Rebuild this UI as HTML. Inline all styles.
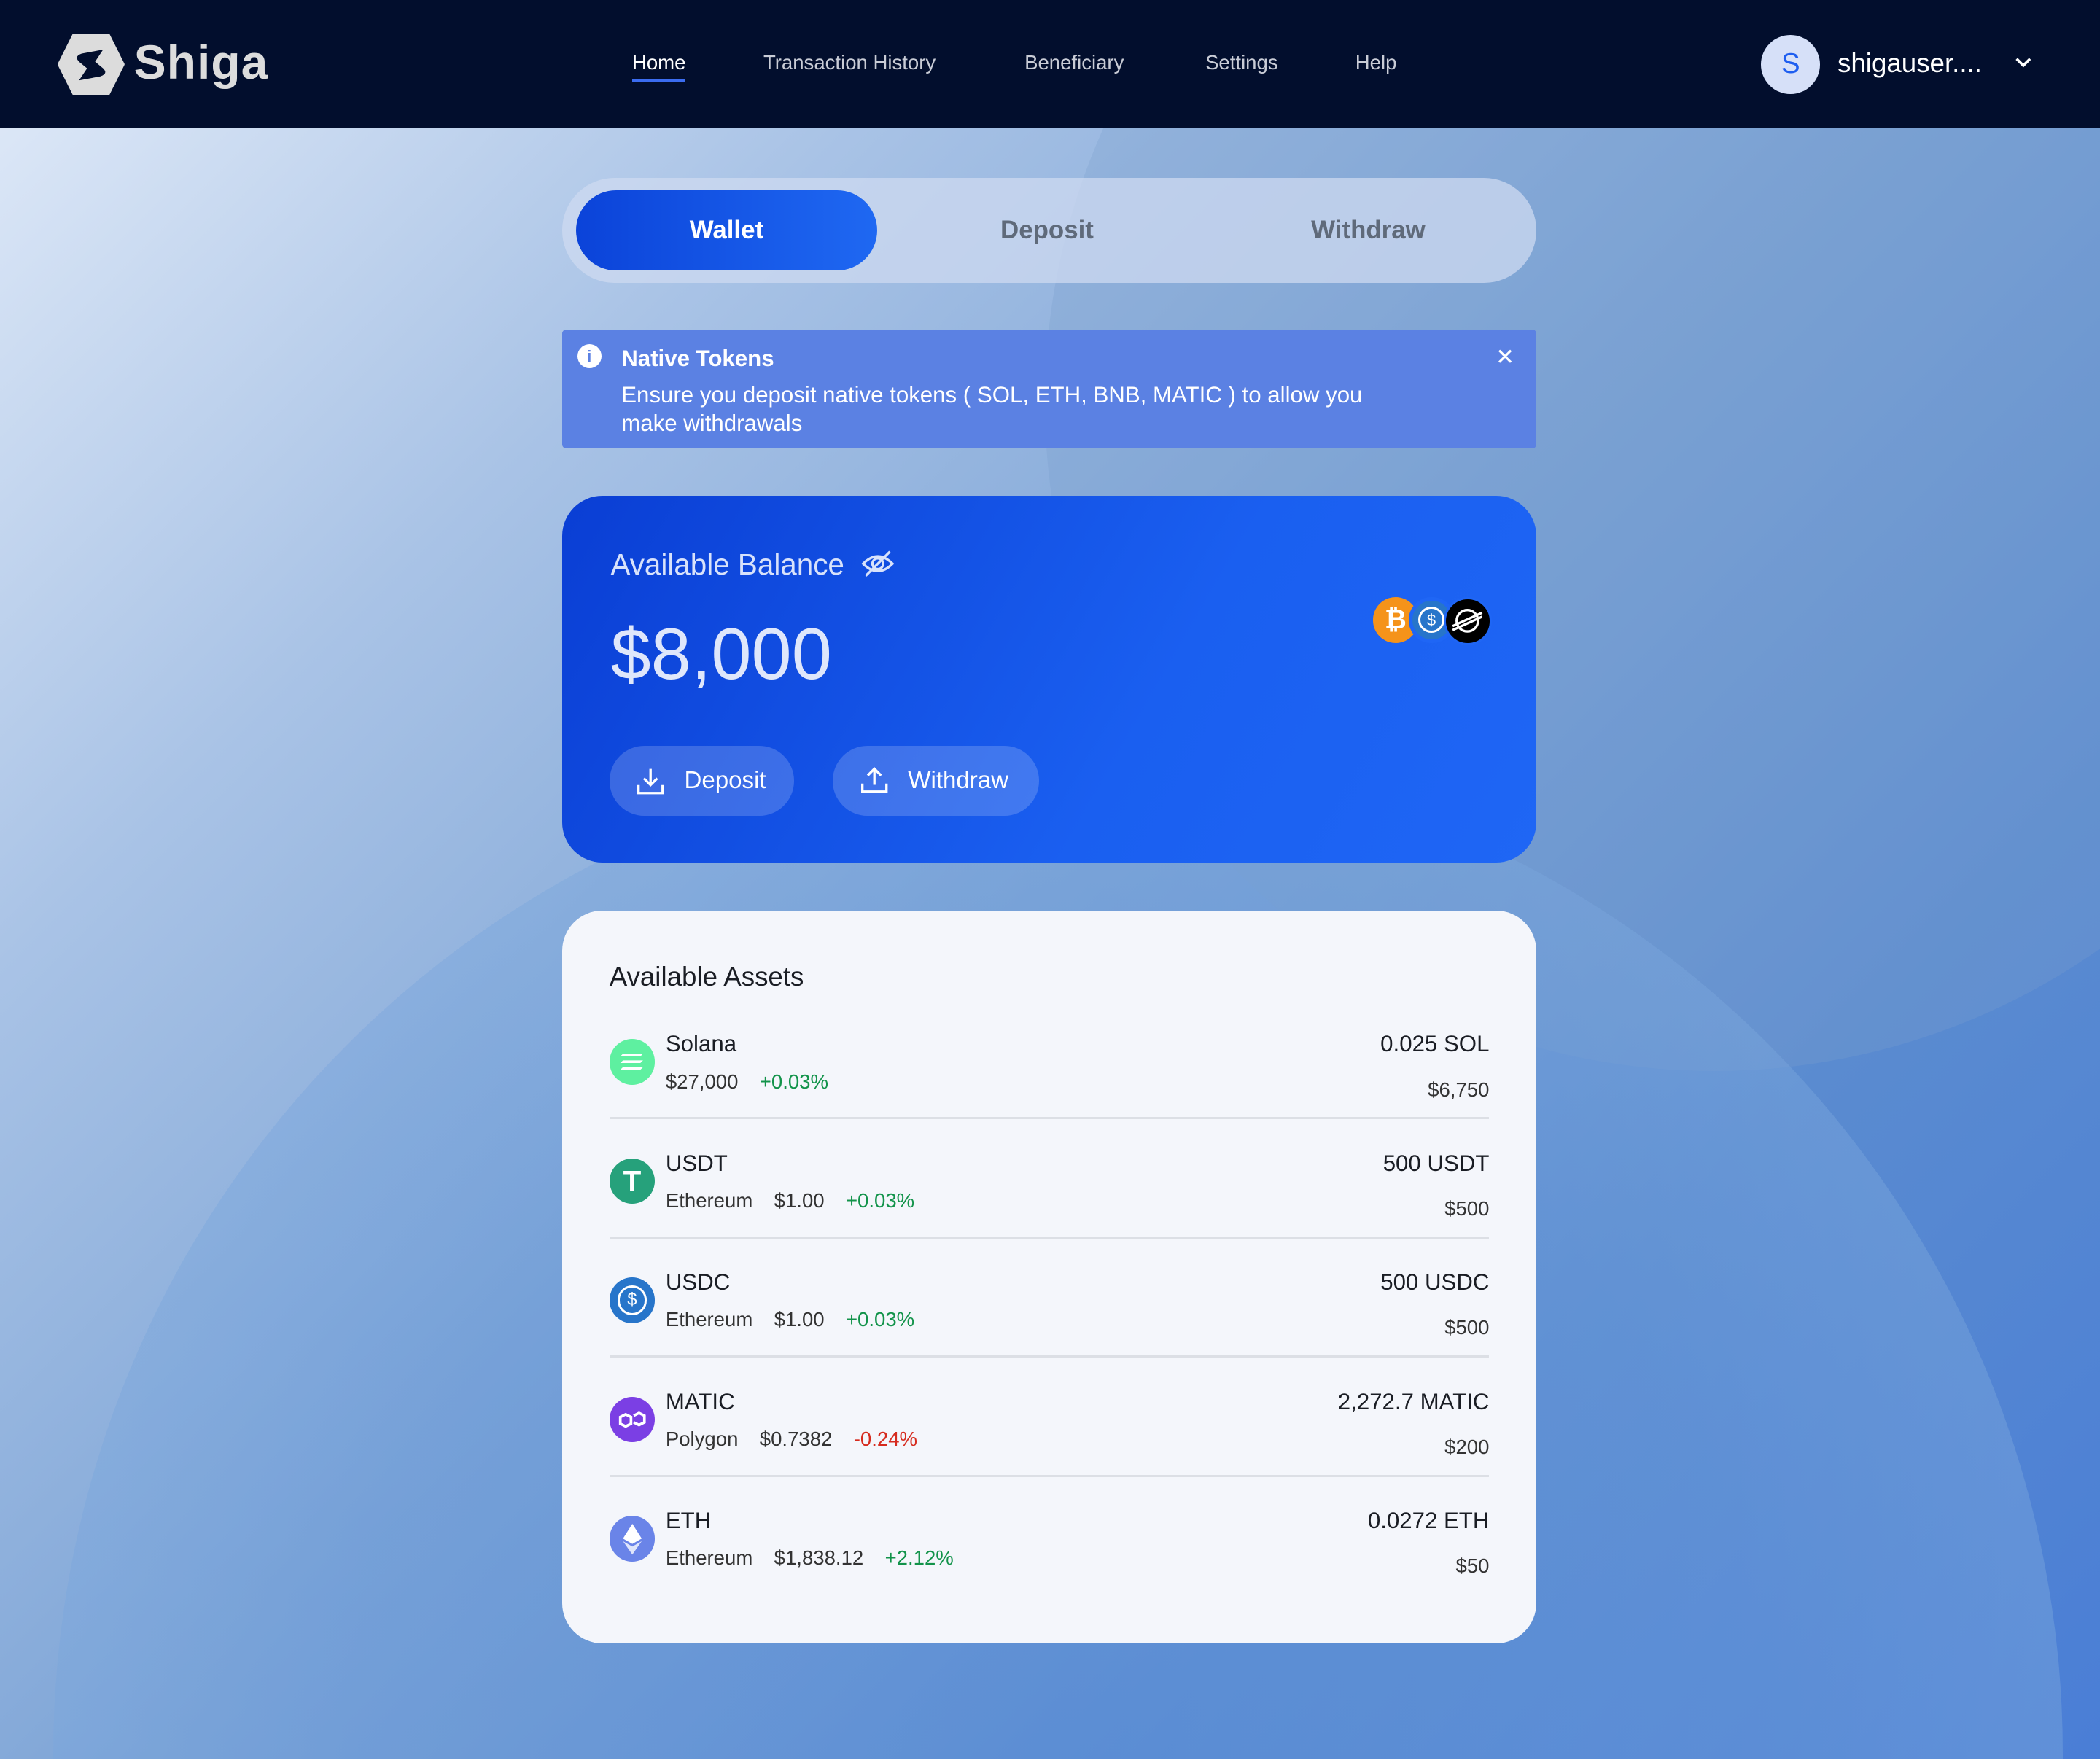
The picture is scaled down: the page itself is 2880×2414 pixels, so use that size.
<!DOCTYPE html>
<html><head><meta charset="utf-8"><style>
*{margin:0;padding:0;box-sizing:border-box}
html,body{width:2880px;height:2414px;overflow:hidden}
body{font-family:"Liberation Sans",sans-serif}
#r{zoom:1.83674;width:1568px;height:1314px;position:relative;overflow:hidden;
background:linear-gradient(135deg,#e3ecf9 0%,#a9c3e6 25%,#7da4d6 50%,#5a8bd0 75%,#4a7ed6 100%)}
.c1{position:absolute;left:40px;top:560px;width:1500px;height:1500px;border-radius:50%;background:radial-gradient(circle at 50% 50%,#5a8ed8 0%,#6a9ad9 50%,#7aa6dc 70%);opacity:.45}
.c2{position:absolute;left:780px;top:-200px;width:1000px;height:1000px;border-radius:50%;background:#7aa0cc;opacity:.3}
.hd{position:absolute;left:0;top:0;width:1568px;height:96px;background:#020e2d;color:#e5e7ee}
.nav{position:absolute;top:38px;font-size:15px;color:#c9ccd6}
.tabs{position:absolute;left:420px;top:133px;width:727px;height:78px;border-radius:39px;background:rgba(205,218,240,.75)}
.pill{position:absolute;left:10px;top:9px;width:225px;height:60px;border-radius:30px;background:linear-gradient(90deg,#0b43d9,#1f68f2);color:#fff;font-weight:bold;font-size:19px;text-align:center;line-height:60px}
.tt{position:absolute;top:28px;font-size:19px;font-weight:bold;color:#5f6a7a}
.al{position:absolute;left:420px;top:246px;width:727px;height:89px;background:#5b81e3;border-radius:3px;color:#fff}
.bc{position:absolute;left:420px;top:370px;width:727px;height:274px;border-radius:30px;background:linear-gradient(120deg,#0a3ed4,#1a5ff0 60%,#1f66f5)}
.btn{position:absolute;top:187px;height:52px;border-radius:26px;background:rgba(255,255,255,.18);color:#fff;font-size:18px;line-height:52px}
.ac{position:absolute;left:420px;top:680px;width:727px;height:547px;border-radius:30px;background:#f4f6fb;color:#1a1d24}
.row{position:absolute;left:35px;width:657px;height:70px;border-bottom:2px solid #dcdfe5}
.ic{position:absolute;left:0;top:10px;width:34px;height:34px;border-radius:50%}
.nm{position:absolute;left:42px;top:4px;font-size:17px}
.sb{position:absolute;left:42px;top:33px;font-size:15px;color:#333}
.sb span{margin-right:16px}
.g{color:#12934a}.rd{color:#d62b1e}
.r1{position:absolute;right:0;top:4px;font-size:17px}
.r2{position:absolute;right:0;top:39px;font-size:15px;color:#333}
</style></head><body><div id="r">
<div class="c2"></div><div class="c1"></div>
<div class="hd">
<svg style="position:absolute;left:43px;top:25px" width="50" height="46" viewBox="0 0 50 46"><path d="M12 1H38L49 23L38 45H12L1 23Z" fill="#dcdcdc" stroke="#dcdcdc" stroke-linejoin="round" stroke-width="2"/><path d="M34 12L18 15Q12 17 16 21L22 26L16 35L32 32Q38 30 34 26L28 21L34 12Z" fill="#020e2d"/></svg>
<div style="position:absolute;left:100px;top:26px;font-size:36px;font-weight:bold;color:#dcdcdc;letter-spacing:.5px">Shiga</div>
<div class="nav" style="left:472px;color:#fff">Home<div style="height:2px;background:#3b6cf0;margin-top:4px"></div></div>
<div class="nav" style="left:570px">Transaction History</div>
<div class="nav" style="left:765px">Beneficiary</div>
<div class="nav" style="left:900px">Settings</div>
<div class="nav" style="left:1012px">Help</div>
<div style="position:absolute;left:1315px;top:26px;width:44px;height:44px;border-radius:50%;background:#d6e0f8;color:#1e5ef0;font-size:21px;text-align:center;line-height:44px">S</div>
<div style="position:absolute;left:1372px;top:36px;font-size:20px;color:#fff">shigauser....</div>
<svg style="position:absolute;left:1504px;top:42px" width="14" height="10"><path d="M2 2L7 7L12 2" stroke="#fff" stroke-width="2" fill="none"/></svg>
</div>
<div class="tabs"><div class="pill">Wallet</div><div class="tt" style="left:327px">Deposit</div><div class="tt" style="left:559px">Withdraw</div></div>
<div class="al">
<div style="position:absolute;left:11px;top:11px;width:18px;height:18px;border-radius:50%;background:#fff;color:#5b81e3;font-size:12px;font-weight:bold;text-align:center;line-height:18px">i</div>
<div style="position:absolute;left:44px;top:12px;font-size:17px;font-weight:bold">Native Tokens</div>
<div style="position:absolute;left:44px;top:39px;font-size:17px;line-height:21px;width:595px">Ensure you deposit native tokens ( SOL, ETH, BNB, MATIC ) to allow you make withdrawals</div>
<div style="position:absolute;right:16px;top:11px;font-size:17px">✕</div>
</div>
<div class="bc">
<div style="position:absolute;left:36px;top:39px;font-size:22px;color:#d8e2fb">Available Balance
<svg style="vertical-align:-3px;margin-left:6px" width="26" height="22" viewBox="0 0 26 22"><path d="M2 11Q13 0 24 11Q13 22 2 11Z" stroke="#d8e2fb" stroke-width="1.8" fill="none"/><circle cx="13" cy="11" r="4" stroke="#d8e2fb" stroke-width="1.8" fill="none"/><path d="M4 20L22 2" stroke="#d8e2fb" stroke-width="1.8"/></svg></div>
<div style="position:absolute;left:36px;top:88px;font-size:54px;color:#dfe7fb">$8,000</div>
<div style="position:absolute;left:605px;top:76px;width:34px;height:34px;border-radius:50%;background:#f5931a;color:#fff;font-weight:bold;font-size:20px;text-align:center;line-height:34px">₿</div>
<div style="position:absolute;left:632px;top:76px;width:34px;height:34px;border-radius:50%;background:#2775ca;border:3px solid #1f66f5"><div style="margin:4px;width:20px;height:20px;border-radius:50%;border:2px solid #fff;color:#fff;font-size:12px;text-align:center;line-height:17px">$</div></div>
<div style="position:absolute;left:658px;top:76px;width:36px;height:36px;border-radius:50%;background:#000;border:2px solid #1f66f5"><svg width="32" height="32" viewBox="0 0 32 32"><circle cx="16" cy="16" r="8" stroke="#fff" stroke-width="1.8" fill="none"/><path d="M5 20L27 10M5 23L27 13" stroke="#fff" stroke-width="1.8"/></svg></div>
<div class="btn" style="left:35px;width:138px"><svg style="position:absolute;left:20px;top:15px" width="22" height="22" viewBox="0 0 22 22" fill="none" stroke="#fff" stroke-width="1.8"><path d="M11 2V14M6 9L11 14L16 9M2 14V20H20V14"/></svg><span style="position:absolute;left:56px">Deposit</span></div>
<div class="btn" style="left:202px;width:154px"><svg style="position:absolute;left:20px;top:14px" width="22" height="22" viewBox="0 0 22 22" fill="none" stroke="#fff" stroke-width="1.8"><path d="M11 15V3M6 8L11 3L16 8M2 14V20H20V14"/></svg><span style="position:absolute;left:56px">Withdraw</span></div>
</div>
<div class="ac">
<div style="position:absolute;left:35px;top:38px;font-size:20px">Available Assets</div>
<div class="row" style="top:86px"><div class="ic" style="background:#5ef0a0"><svg width="34" height="34"><path d="M10 11H25L23 13H8ZM10 16H25L23 18H8ZM10 21H25L23 23H8Z" fill="#fff"/></svg></div><div class="nm">Solana</div><div class="sb"><span>$27,000</span><span class="g">+0.03%</span></div><div class="r1">0.025 SOL</div><div class="r2">$6,750</div></div>
<div class="row" style="top:175px"><div class="ic" style="background:#26a17b;color:#fff;text-align:center;font-weight:bold;font-size:22px;line-height:34px">T</div><div class="nm">USDT</div><div class="sb"><span>Ethereum</span><span>$1.00</span><span class="g">+0.03%</span></div><div class="r1">500 USDT</div><div class="r2">$500</div></div>
<div class="row" style="top:264px"><div class="ic" style="background:#2775ca"><div style="margin:6px;width:22px;height:22px;border-radius:50%;border:2px solid #fff;color:#fff;font-size:13px;text-align:center;line-height:19px">$</div></div><div class="nm">USDC</div><div class="sb"><span>Ethereum</span><span>$1.00</span><span class="g">+0.03%</span></div><div class="r1">500 USDC</div><div class="r2">$500</div></div>
<div class="row" style="top:353px"><div class="ic" style="background:#7b3fe4"><svg width="34" height="34" fill="none" stroke="#fff" stroke-width="2"><path d="M8 15L12 13L16 15V20L12 22L8 20ZM18 14L22 12L26 14V19L22 21L18 19"/></svg></div><div class="nm">MATIC</div><div class="sb"><span>Polygon</span><span>$0.7382</span><span class="rd">-0.24%</span></div><div class="r1">2,272.7 MATIC</div><div class="r2">$200</div></div>
<div class="row" style="top:442px;border:none"><div class="ic" style="background:#6a84e8"><svg width="34" height="34"><path d="M17 6L24 17L17 21L10 17Z" fill="#fff"/><path d="M17 23L24 19L17 29L10 19Z" fill="#dfe5fb"/></svg></div><div class="nm">ETH</div><div class="sb"><span>Ethereum</span><span>$1,838.12</span><span class="g">+2.12%</span></div><div class="r1">0.0272 ETH</div><div class="r2">$50</div></div>
</div>
</div></body></html>
